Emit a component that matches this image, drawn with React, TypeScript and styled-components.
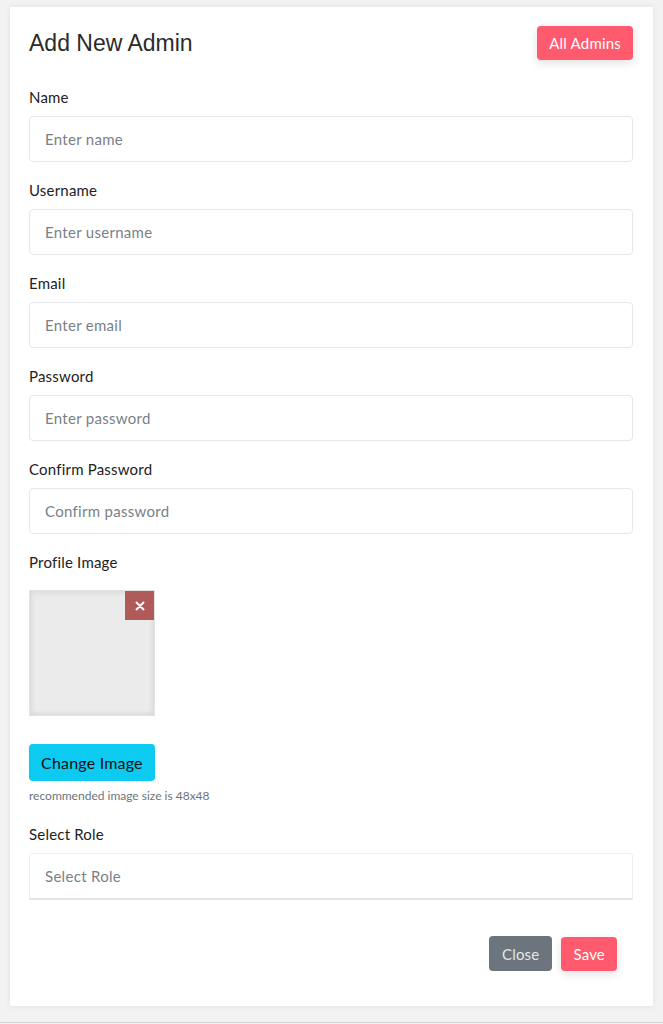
import * as React from 'react';
import styled, { createGlobalStyle } from 'styled-components';

const GlobalStyle = createGlobalStyle`
  html, body {
    margin: 0;
    padding: 0;
    background: #f2f2f2;
  }
  body {
    font-family: Lato, "Noto Sans", sans-serif;
    color: #212529;
  }
  * {
    box-sizing: border-box;
  }
`;

const Page = styled.div`
  min-height: 1023px;
  padding: 7px 10px 14px 10px;
  border-bottom: 1px solid #d4d4d4;
`;

const Card = styled.div`
  background: #fff;
  box-shadow: 0 0 6px rgba(0, 0, 0, 0.08);
  padding: 19px 20px 35px 19px;
`;

const Header = styled.div`
  display: flex;
  justify-content: space-between;
  align-items: center;
  margin-bottom: 28px;
`;

const Title = styled.h4`
  margin: 0;
  font-family: "Liberation Sans", Arial, sans-serif;
  font-weight: 400;
  font-size: 23px;
  color: #2b2b2b;
`;

const Button = styled.button<{ $variant: 'primary' | 'secondary' | 'info' }>`
  border: none;
  border-radius: 4px;
  font-family: Lato, "Noto Sans", sans-serif;
  font-size: ${(p) => (p.$variant === 'info' ? '16px' : '15px')};
  letter-spacing: 0.2px;
  height: ${(p) => (p.$variant === 'info' ? '37px' : p.$variant === 'secondary' ? '35px' : '34px')};
  padding: 0 ${(p) => (p.$variant === 'secondary' ? '13px' : '12px')};
  cursor: pointer;
  background: ${(p) =>
    p.$variant === 'primary' ? '#ff5a6d' : p.$variant === 'secondary' ? '#6c757d' : '#0dcaf0'};
  color: ${(p) => (p.$variant === 'info' ? '#111' : p.$variant === 'secondary' ? '#e4e6e8' : '#fff')};
  box-shadow: ${(p) => (p.$variant === 'primary' ? '0 3px 10px rgba(0, 0, 0, 0.12)' : 'none')};
`;

const Field = styled.div<{ $gapTop?: number }>`
  margin-top: ${(p) => p.$gapTop ?? 0}px;
  margin-bottom: 19px;
`;

const Label = styled.label`
  display: block;
  font-size: 15px;
  letter-spacing: 0.2px;
  color: #222;
  margin-bottom: 10px;
  line-height: 18px;
`;

const Input = styled.input`
  display: block;
  width: 100%;
  height: 46px;
  border: 1px solid #e6e7ec;
  border-radius: 4px;
  padding: 0 15px;
  font-family: Lato, "Noto Sans", sans-serif;
  font-size: 15px;
  letter-spacing: 0.3px;
  color: #333;
  outline: none;
  &::placeholder {
    color: #7a7f87;
  }
`;

const ImageBox = styled.div`
  position: relative;
  width: 126px;
  height: 126px;
  background: #ebebeb;
  box-shadow: inset 0 0 6px rgba(0, 0, 0, 0.12);
  border: 1px solid #e2e2e2;
  margin: 19px 0 28px 0;
`;

const RemoveButton = styled.span`
  position: absolute;
  top: 0;
  right: 0;
  width: 29px;
  height: 29px;
  background: #b05a5a;
  display: flex;
  align-items: center;
  justify-content: center;
`;

const Hint = styled.div`
  font-size: 12px;
  color: #6c757d;
  margin-top: 7px;
`;

const Select = styled.div`
  height: 47px;
  border: 1px solid #edeef2;
  border-bottom: 2px solid #e4e6ea;
  border-radius: 4px 4px 0 0;
  padding: 0 15px;
  display: flex;
  align-items: center;
  font-size: 15px;
  letter-spacing: 0.3px;
  color: #7a7f87;
`;

const Footer = styled.div`
  display: flex;
  justify-content: flex-end;
  align-items: center;
  gap: 9px;
  padding-right: 16px;
  margin-top: 36px;
`;

const fields = [
  { label: 'Name', placeholder: 'Enter name', type: 'text' },
  { label: 'Username', placeholder: 'Enter username', type: 'text' },
  { label: 'Email', placeholder: 'Enter email', type: 'email' },
  { label: 'Password', placeholder: 'Enter password', type: 'password' },
  { label: 'Confirm Password', placeholder: 'Confirm password', type: 'password' },
];

const App: React.FC = () => {
  return (
    <Page>
      <GlobalStyle />
      <Card>
        <Header>
          <Title>Add New Admin</Title>
          <Button $variant='primary'>All Admins</Button>
        </Header>
        {fields.map((f) => (
          <Field key={f.label}>
            <Label>{f.label}</Label>
            <Input type={f.type} placeholder={f.placeholder} />
          </Field>
        ))}
        <div>
          <Label>Profile Image</Label>
          <ImageBox>
            <RemoveButton>
              <svg width='10' height='10' viewBox='0 0 10 10'>
                <path d='M1.5 1.5l7 7M8.5 1.5l-7 7' stroke='#fff' strokeWidth='2' strokeLinecap='round' />
              </svg>
            </RemoveButton>
          </ImageBox>
          <Button $variant='info'>Change Image</Button>
          <Hint>recommended image size is 48x48</Hint>
        </div>
        <Field $gapTop={22}>
          <Label>Select Role</Label>
          <Select>Select Role</Select>
        </Field>
        <Footer>
          <Button $variant='secondary'>Close</Button>
          <Button $variant='primary'>Save</Button>
        </Footer>
      </Card>
    </Page>
  );
};

export default App;
